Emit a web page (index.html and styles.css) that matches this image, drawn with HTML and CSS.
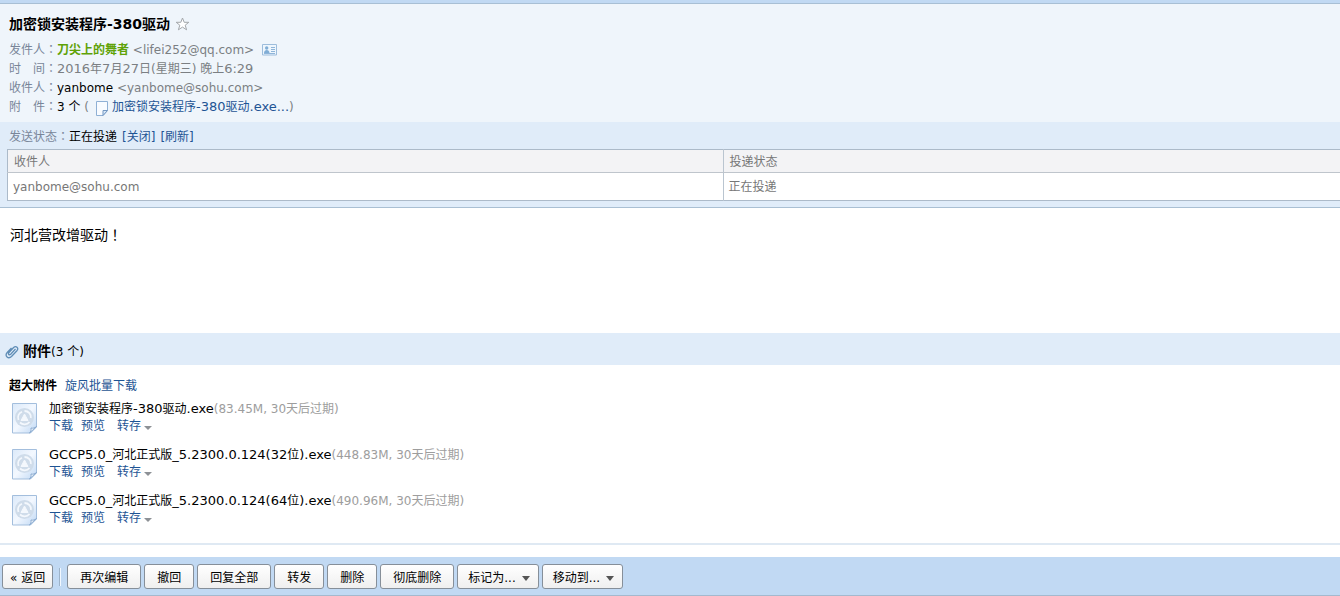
FILE: index.html
```html
<!DOCTYPE html>
<html lang="zh-CN">
<head>
<meta charset="utf-8">
<title>加密锁安装程序-380驱动</title>
<link rel="stylesheet" href="styles.css">
</head>
<body>
<svg class="defs" width="0" height="0" aria-hidden="true">
  <defs>
    <linearGradient id="paper" x1="0" y1="0" x2="1" y2="1">
      <stop offset="0" stop-color="#dbe9f9"/><stop offset=".5" stop-color="#f3f8ff"/><stop offset="1" stop-color="#bed7f3"/>
    </linearGradient>
    <symbol id="file" viewBox="0 0 26 31">
      <path d="M.5.5h24v23.500l-6 6H.5z" fill="url(#paper)" stroke="#a3bedd"/>
      <path d="M24.500 23.500l-7 6.500c1.500-1.500 1.800-3 1.500-5 2 .5 4 0 5.500-1.500z" fill="#fff" stroke="#88a9cf"/>
      <circle cx="12.500" cy="14.500" r="9.500" fill="#cfdcea"/>
      <path d="M12.500 8c4 0 7 3.500 6.300 7M17.500 19c-2.500 3-7 3-9.500.5M6.500 17c-1.300-3.500.3-6.800 3.500-8.300" fill="none" stroke="#f4f8fd" stroke-width="1.800"/>
      <path d="M12.500 11l3.500 6.500H9z" fill="#f4f8fd" stroke="#f4f8fd" stroke-linejoin="round"/>
    </symbol>
  </defs>
</svg>
<header class="mail-head">
  <h1 class="subject">加密锁安装程序-380驱动
    <svg class="star" width="15" height="14" viewBox="0 0 15 14"><path d="M7.500 1l1.700 4.300h4.600L10.200 8.200l1.400 4.600-4.100-2.700-4.100 2.700 1.400-4.600L1.200 5.300h4.600z" fill="#fff" stroke="#a3a7ab"/></svg>
  </h1>
  <div class="meta"><span class="label">发件人<span class="mark" lang="zh-TW">：</span></span><b class="sender">刀尖上的舞者</b>&nbsp;<span>&lt;lifei252@qq.com&gt;</span>
    <svg class="card" width="15" height="12" viewBox="0 0 15 12"><path d="M.5.500h14v10.500H.5z" fill="#eef6fd" stroke="#9dbddc"/><circle cx="4.700" cy="4" r="1.700" fill="#80add5"/><path d="M2 9c0-4 5.500-4 5.500 0z" fill="#80add5"/><path d="M9 3.500h4M9 5.500h4M9 7.500h4M2 9.500h11" stroke="#8fb5d9"/></svg>
  </div>
  <div class="meta"><span class="label">时　间<span class="mark" lang="zh-TW">：</span></span><span><span class="latin">2016</span>年<span class="latin">7</span>月<span class="latin">27</span>日(星期三) 晚上<span class="latin">6:29</span></span></div>
  <div class="meta"><span class="label">收件人<span class="mark" lang="zh-TW">：</span></span><span class="dark">yanbome</span>&nbsp;<span>&lt;yanbome@sohu.com&gt;</span></div>
  <div class="meta"><span class="label">附　件<span class="mark" lang="zh-TW">：</span></span><span class="dark">3 个</span>&nbsp;(
    <svg class="sheet" width="12" height="15" viewBox="0 0 12 15"><path d="M.5.500h11v9l-4.500 5H.5z" fill="#f8fbff" stroke="#8fb0d5"/><path d="M11.500 9.500H7v5z" fill="#d9e8f8" stroke="#7397c2"/></svg>
    <a href="#files">加密锁安装程序<span class="latin">-380</span>驱动<span class="latin">.exe...</span></a>)</div>
</header>
<section class="status">
  <div class="status-line"><span class="label">发送状态<span class="mark" lang="zh-TW">：</span></span><span class="dark">正在投递</span><a href="#close">[关闭]</a><a href="#refresh">[刷新]</a></div>
  <table class="delivery">
    <thead><tr><th scope="col">收件人</th><th scope="col">投递状态</th></tr></thead>
    <tbody><tr><td>yanbome@sohu.com</td><td>正在投递</td></tr></tbody>
  </table>
</section>
<main class="body-text">河北营改增驱动<span class="mark" lang="zh-TW">！</span></main>
<section id="files">
  <h2 class="files-head">
    <svg width="14" height="14" viewBox="0 0 14 14"><path d="M10.500 4L5.700 9.200c-1.600 1.400-3-.2-1.700-1.700L8.600 2.500c2.500-2.300 5.500.5 3.300 3.200L6.500 11.500c-3.200 3-7.200-.5-4.300-4L6.500 3" fill="none" stroke="#5f8db6" stroke-width="1.300"/></svg>
    <span>附件<span class="count">(3 个)</span></span>
  </h2>
  <div class="files">
    <div class="files-title"><b>超大附件</b><a href="#batch">旋风批量下载</a></div>
    <ul class="file-list">
      <li><svg width="26" height="31"><use href="#file"/></svg><div><div>加密锁安装程序<span class="latin">-380</span>驱动<span class="latin">.exe</span><span class="info">(83.45M, 30天后过期)</span></div><div class="actions"><a href="#d1">下载</a><a href="#p1">预览</a><a class="save" href="#s1">转存</a></div></div></li>
      <li><svg width="26" height="31"><use href="#file"/></svg><div><div><span class="latin">GCCP5.0_</span>河北正式版<span class="latin">_5.2300.0.124(32</span>位<span class="latin">).exe</span><span class="info">(448.83M, 30天后过期)</span></div><div class="actions"><a href="#d2">下载</a><a href="#p2">预览</a><a class="save" href="#s2">转存</a></div></div></li>
      <li><svg width="26" height="31"><use href="#file"/></svg><div><div><span class="latin">GCCP5.0_</span>河北正式版<span class="latin">_5.2300.0.124(64</span>位<span class="latin">).exe</span><span class="info">(490.96M, 30天后过期)</span></div><div class="actions"><a href="#d3">下载</a><a href="#p3">预览</a><a class="save" href="#s3">转存</a></div></div></li>
    </ul>
  </div>
</section>
<nav class="toolbar">
  <button class="back" type="button">« 返回</button><span class="divider"></span>
  <button type="button">再次编辑</button>
  <button type="button">撤回</button>
  <button type="button">回复全部</button>
  <button type="button">转发</button>
  <button type="button">删除</button>
  <button type="button">彻底删除</button>
  <button class="menu" type="button">标记为...</button>
  <button class="menu" type="button">移动到...</button>
</nav>
</body>
</html>
```
FILE: styles.css
```css
* { box-sizing: border-box; }
body {
  margin: 0;
  background: #fff;
  color: #000;
  font: 12px/19px "DejaVu Sans", "Noto Sans CJK SC", sans-serif;
}
a { color: #1e5494; text-decoration: none; }
.defs { position: absolute; }
.latin { font-size: 13px; line-height: 1; }
.mark { font-family: "Noto Sans CJK TC", sans-serif; line-height: 1; }
.mail-head {
  border-top: 3px solid #c1d9f3;
  padding: 9px 9px 5px;
  background: #eff5fb;
  box-shadow: inset 0 1px #a8bfd4;
}
.subject {
  display: flex;
  align-items: center;
  gap: 5px;
  margin: 0 0 5px;
  font-size: 14px;
  line-height: 24px;
}
.meta { display: flex; align-items: center; height: 19px; color: #7b7f83; white-space: nowrap; }
.label { width: 48px; color: #798699; white-space: nowrap; }
.sender { color: #5fa207; }
.dark { color: #000; }
.card { margin: 0 0 2px 8px; }
.sheet { margin: 2px 4px 0 7px; }
.status {
  padding: 6px 0 6px 7px;
  background: #e0ecf9;
  border-bottom: 1px solid #a9bfd3;
  overflow: hidden;
}
.status-line { display: flex; gap: 5px; padding-left: 2px; margin-bottom: 2px; white-space: nowrap; }
.status-line .label { width: 55px; }
.delivery { width: 100%; border-collapse: collapse; table-layout: fixed; background: #fff; color: #777; border: 1px solid #acbac9; border-right: 0; }
.delivery th, .delivery td { padding: 5px 5px 3px; text-align: left; font-weight: normal; }
.delivery th { padding: 3px 6px 0; background: #f3f3f5; border-bottom: 1px solid #bfc5cc; }
.delivery th:first-child { width: 53.7%; }
.delivery th + th, .delivery td + td { border-left: 1px solid #bac5d0; }
.body-text { min-height: 125px; padding: 18px 10px; font-size: 14px; }
.files-head {
  display: flex;
  align-items: center;
  gap: 4px;
  height: 32px;
  margin: 0;
  padding: 5px 5px 0;
  background: #e0ecf9;
  font-size: 14px;
}
.count { font-size: 12px; font-weight: normal; }
.files { padding: 12px 9px 16px; border-bottom: 2px solid #dfe9f3; }
.files-title { display: flex; gap: 8px; margin-bottom: 5px; }
.file-list { display: flex; flex-direction: column; gap: 12px; margin: 0; padding: 0 0 0 3px; list-style: none; line-height: 17px; }
.file-list li { display: flex; gap: 11px; align-items: center; }
.info { color: #9d9d9d; }
.actions { display: flex; gap: 8px; }
.save { display: flex; align-items: center; gap: 3px; margin-left: 4px; }
.save::after { content: ""; margin-top: 2px; border: 4px solid transparent; border-top-color: #8d9196; border-bottom: 0; }
.toolbar {
  display: flex;
  align-items: center;
  gap: 3px;
  margin-top: 12px;
  padding: 7px 2px 6px;
  background: #c1d9f3;
  border-bottom: 1px solid #a4b9ce;
}
.toolbar button {
  height: 25px;
  padding: 3px 12px 0;
  border: 1px solid #868f99;
  border-radius: 3px;
  background: linear-gradient(#fff, #efefef);
  color: #000;
  font: inherit;
  white-space: nowrap;
}
.toolbar .back { padding: 3px 7px 0; }
.divider { width: 2px; height: 18px; margin: 0 3px; border-left: 1px solid #9db3c9; background: #f2f8ff; }
.toolbar .menu { display: flex; align-items: center; gap: 6px; padding: 3px 8px 0 10px; }
.menu::after { content: ""; border: 4px solid transparent; border-top: 5px solid #555; border-bottom: 0; }
```
